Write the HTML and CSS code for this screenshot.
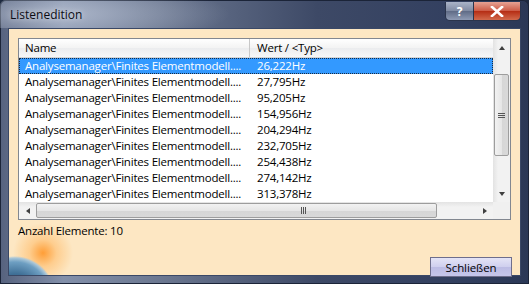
FILE: index.html
```html
<!DOCTYPE html>
<html lang="de">
<head>
    <title>Listenedition</title>
    <link rel="stylesheet" href="styles.css">
</head>
<body>

<div class="window">
    <div class="titlebar">
        <span class="title">Listenedition</span>
        <div class="caption-buttons">
            <span class="cap-btn help">?</span>
            <span class="cap-btn close">
                <svg width="14" height="11" viewBox="0 0 14 11"><path d="M2 1 L12 10 M12 1 L2 10" stroke="#fff" stroke-width="2.6" stroke-linecap="square"/></svg>
            </span>
        </div>
    </div>

    <div class="client">
        <div class="listbox">
            <div class="list-main">
                <div class="header">
                    <div class="col-name">Name</div>
                    <div class="col-value">Wert / &lt;Typ&gt;</div>
                </div>
                <div id="rows" class="rows"></div>
            </div>
            <div class="vscroll">
                <div class="sb-btn"><span class="arrow up"></span></div>
                <div class="vtrack">
                    <div class="vthumb"><span class="grip v"></span></div>
                </div>
                <div class="sb-btn"><span class="arrow down"></span></div>
            </div>
            <div class="hscroll">
                <div class="sb-btn"><span class="arrow left"></span></div>
                <div class="htrack">
                    <div class="hthumb"><span class="grip h"></span></div>
                </div>
                <div class="sb-btn"><span class="arrow right"></span></div>
            </div>
            <div class="corner"></div>
        </div>

        <div class="count">Anzahl Elemente: 10</div>

        <div class="footer">
            <button class="close-btn">Schließen</button>
        </div>

        <div class="globe"></div>
    </div>
</div>

<script>
    // Eigenfrequenzen aus dem Analysemanager
    const values = ['26,222Hz', '27,795Hz', '95,205Hz', '154,956Hz', '204,294Hz',
                    '232,705Hz', '254,438Hz', '274,142Hz', '313,378Hz'];

    const rows = document.getElementById('rows');
    values.forEach((value, i) => {
        const row = document.createElement('div');
        row.className = i === 0 ? 'row selected' : 'row';
        row.innerHTML = '<div class="col-name">Analysemanager\\Finites Elementmodell....</div>' +
                        '<div class="col-value">' + value + '</div>';
        rows.appendChild(row);
    });
</script>

</body>
</html>
```

FILE: styles.css
```css
body {
    margin: 0;
    background-color: #1e2a40;
    font-family: "Open Sans", "Noto Sans", sans-serif;
    font-size: 11.5px;
    letter-spacing: -0.2px;
    color: #000;
}
.window {
    width: 529px;
    height: 284px;
    border-radius: 6px 6px 0 0;
    background: linear-gradient(90deg, #56627e 0%, #8390aa 12%, #6c7891 30%, #3d4966 60%, #334060 85%, #2b3856 100%);
    box-shadow: inset 0 0 0 1px #1b2438;
    overflow: hidden;
}
.titlebar {
    height: 28px;
    display: flex;
    justify-content: space-between;
    align-items: flex-start;
    padding: 0 8px 0 10px;
    background: radial-gradient(ellipse 180px 30px at 50px 14px, rgba(210, 218, 232, 0.55), rgba(210, 218, 232, 0) 100%);
}
.title {
    margin-top: 6px;
    font-size: 12px;
    letter-spacing: 0;
    color: #0c0c14;
    text-shadow: 0 0 6px rgba(255, 255, 255, 0.7);
}
.caption-buttons {
    display: flex;
    margin-top: 2px;
    border: 1px solid #2a344c;
    border-top: none;
    border-radius: 0 0 5px 5px;
    overflow: hidden;
    height: 18px;
}
.cap-btn {
    display: flex;
    align-items: center;
    justify-content: center;
    height: 18px;
    color: #fff;
    font-weight: bold;
    font-size: 12px;
}
.help {
    width: 27px;
    background: linear-gradient(#aab4c8, #7f8aa2 50%, #5f6b86 51%, #8f9bb4);
    border-right: 1px solid #2a344c;
}
.close {
    width: 46px;
    background: linear-gradient(#e6a293, #cc5a45 50%, #b52d14 51%, #d26a4c);
}
.client {
    position: relative;
    margin: 0 8px;
    height: 248px;
    box-sizing: border-box;
    border: 1px solid #3a4866;
    background-color: #fde7c3;
    padding: 9px 9px 0 9px;
}
.listbox {
    position: relative;
    z-index: 1;
    height: 182px;
    box-sizing: border-box;
    border: 1px solid #828790;
    background-color: #fff;
    display: grid;
    grid-template-columns: 1fr 17px;
    grid-template-rows: 1fr 17px;
}
.list-main {
    overflow: hidden;
}
.header {
    display: flex;
    height: 19px;
    line-height: 18px;
    background: linear-gradient(#ffffff, #f3f3f3 50%, #ebecee 51%, #f6f6f7);
    border-bottom: 1px solid #d5d5d5;
    box-sizing: border-box;
}
.header .col-name {
    border-right: 1px solid #c8c8c8;
}
.col-name {
    width: 231px;
    padding-left: 6px;
    box-sizing: border-box;
    white-space: nowrap;
    flex-shrink: 0;
}
.col-value {
    padding-left: 7px;
    white-space: nowrap;
}
.row {
    display: flex;
    height: 16px;
    line-height: 15px;
    box-sizing: border-box;
}
.row.selected {
    background-color: #3399ff;
    color: #fff;
    outline: 1px dotted #1a2a40;
    outline-offset: -1px;
}
.vscroll {
    display: flex;
    flex-direction: column;
    background: linear-gradient(90deg, #e3e3e3, #f2f2f2 30%, #f2f2f2);
}
.hscroll {
    display: flex;
    background: linear-gradient(#e3e3e3, #f2f2f2 30%, #f2f2f2);
}
.corner {
    background-color: #f0f0f0;
}
.sb-btn {
    width: 17px;
    height: 17px;
    display: flex;
    align-items: center;
    justify-content: center;
    flex-shrink: 0;
}
.arrow {
    width: 0;
    height: 0;
    border: 3px solid transparent;
}
.arrow.up { border-bottom: 4px solid #404040; border-top: none; }
.arrow.down { border-top: 4px solid #404040; border-bottom: none; }
.arrow.left { border-right: 4px solid #404040; border-left: none; }
.arrow.right { border-left: 4px solid #404040; border-right: none; }
.vtrack {
    flex: 1;
    padding-top: 18px;
}
.vthumb {
    height: 82px;
    margin: 0 1px;
    border: 1px solid #9d9d9d;
    border-radius: 2px;
    background: linear-gradient(90deg, #f2f2f2, #e6e6e6 50%, #d6d6d6 51%, #d9d9d9);
    display: flex;
    align-items: center;
    justify-content: center;
    box-sizing: border-box;
}
.htrack {
    flex: 1;
    padding-right: 39px;
}
.hthumb {
    height: 15px;
    margin-top: 1px;
    border: 1px solid #9d9d9d;
    border-radius: 2px;
    background: linear-gradient(#f2f2f2, #e6e6e6 50%, #d6d6d6 51%, #d9d9d9);
    display: flex;
    align-items: center;
    justify-content: flex-end;
    padding-right: 130px;
    box-sizing: border-box;
}
.grip.v {
    width: 7px;
    height: 5px;
    background: repeating-linear-gradient(#555 0 1px, transparent 1px 2px);
}
.grip.h {
    width: 5px;
    height: 7px;
    background: repeating-linear-gradient(90deg, #555 0 1px, transparent 1px 2px);
}
.count {
    margin-top: 3px;
    line-height: 16px;
    position: relative;
    z-index: 1;
}
.footer {
    display: flex;
    justify-content: flex-end;
    margin-top: 18px;
    margin-right: -1px;
    position: relative;
    z-index: 1;
}
.close-btn {
    width: 82px;
    height: 20px;
    font-family: inherit;
    font-size: 11.5px;
    letter-spacing: -0.1px;
    border: 1px solid #6e6e8c;
    background: linear-gradient(#e4e4f6, #cfcfee 50%, #bcbce4 51%, #c6c6ea);
    padding: 0;
    cursor: pointer;
}
.globe {
    position: absolute;
    left: 0;
    bottom: 0;
    width: 70px;
    height: 60px;
    background:
        radial-gradient(circle 40px at 6px 81px, #25486a 0%, #3f6f96 55%, #6e9fc2 85%, #a9c6d8 95%, rgba(169, 198, 216, 0) 100%),
        radial-gradient(circle 30px at 34px 38px, rgba(255, 150, 40, 0.9) 0%, rgba(255, 180, 90, 0.5) 45%, rgba(253, 231, 195, 0) 100%);
}
```
